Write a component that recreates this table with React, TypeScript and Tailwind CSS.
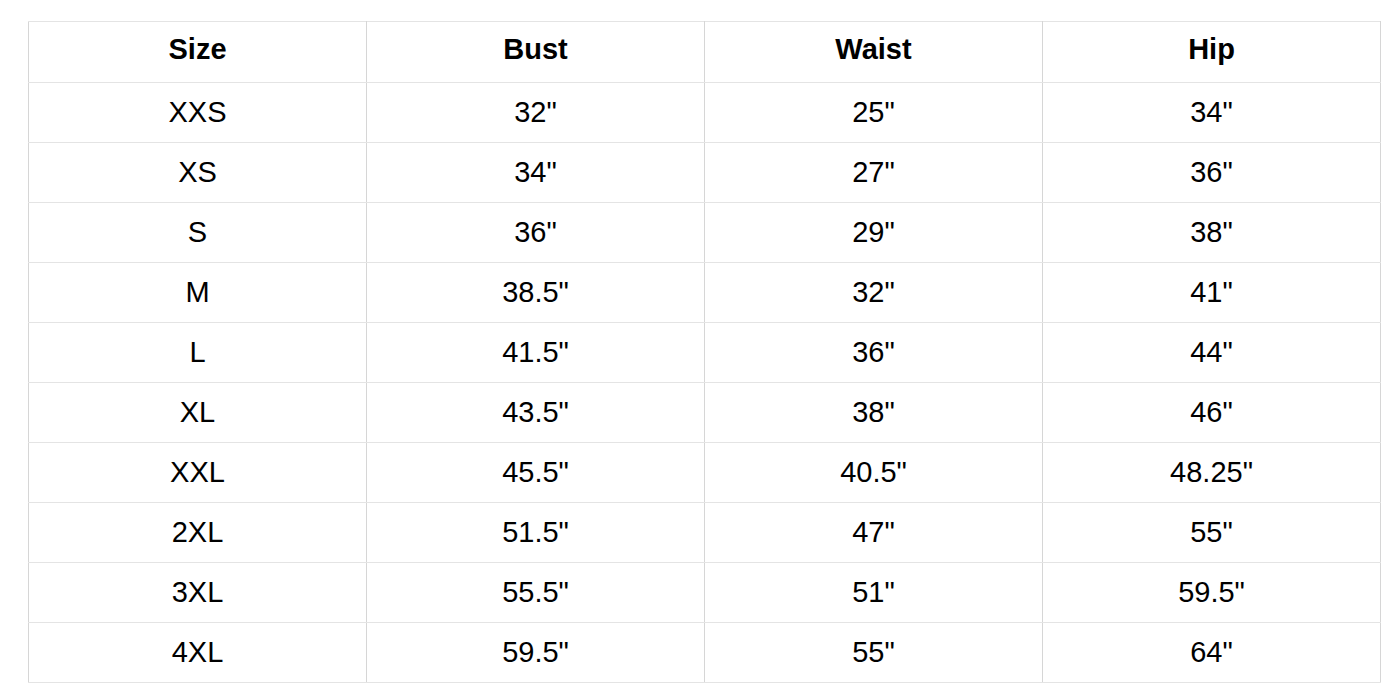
const rows = [
  ['XXS', '32"', '25"', '34"'],
  ['XS', '34"', '27"', '36"'],
  ['S', '36"', '29"', '38"'],
  ['M', '38.5"', '32"', '41"'],
  ['L', '41.5"', '36"', '44"'],
  ['XL', '43.5"', '38"', '46"'],
  ['XXL', '45.5"', '40.5"', '48.25"'],
  ['2XL', '51.5"', '47"', '55"'],
  ['3XL', '55.5"', '51"', '59.5"'],
  ['4XL', '59.5"', '55"', '64"'],
];

const headers = ['Size', 'Bust', 'Waist', 'Hip'];

export default function App() {
  return (
    <div className="min-h-[700px] w-[1400px] bg-white pl-[28px] pt-[21px] font-['Liberation_Sans',Arial,sans-serif] text-black">
      <table className="border-collapse border border-[#dcdcdc] table-fixed w-[1353px]">
        <thead>
          <tr className="h-[61px]">
            {headers.map((h) => (
              <th
                key={h}
                className="w-[338px] border-x border-x-[#d6d6d6] border-y border-y-[#e4e4e4] p-0 pb-[5px] text-center align-middle text-[29px] font-bold"
              >
                {h}
              </th>
            ))}
          </tr>
        </thead>
        <tbody>
          {rows.map((row) => (
            <tr key={row[0]} className="h-[60px]">
              {row.map((cell, i) => (
                <td
                  key={i}
                  className="border-x border-x-[#d6d6d6] border-y border-y-[#e4e4e4] p-0 text-center align-middle text-[29px]"
                >
                  {cell}
                </td>
              ))}
            </tr>
          ))}
        </tbody>
      </table>
    </div>
  );
}
